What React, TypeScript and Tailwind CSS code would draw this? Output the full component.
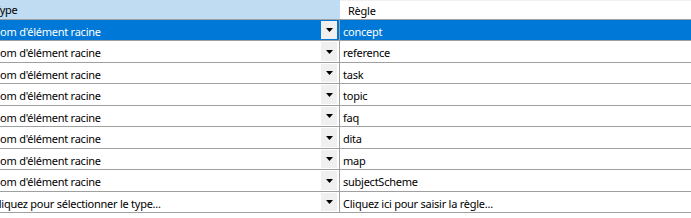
import React from 'react';

const rules = [
    'concept',
    'reference',
    'task',
    'topic',
    'faq',
    'dita',
    'map',
    'subjectScheme',
];

const font = { fontFamily: '"Noto Sans", "Open Sans", sans-serif' };

const DropButton: React.FC = () => (
    <div className="w-[16px] self-stretch my-[1px] bg-[#f0f0f0] flex items-center justify-center shrink-0">
        <svg width="7" height="4" viewBox="0 0 7 4">
            <path d="M0 0h7L3.5 4z" fill="#000" />
        </svg>
    </div>
);

interface RowProps {
    type: string;
    rule: string;
    selected?: boolean;
    tall?: boolean;
}

const Row: React.FC<RowProps> = ({ type, rule, selected, tall }) => (
    <div
        className={`flex border-b border-[#a0a0a0] overflow-hidden ${tall ? 'h-[22px]' : 'h-[21px]'} ${
            selected ? 'bg-[#0078d7] text-white' : 'bg-white text-black'
        }`}
    >
        <div className="w-[339px] flex overflow-hidden pr-[2px]">
            <span className="flex-1 whitespace-nowrap ml-[-8px] mt-[2px] leading-[20px]">{type}</span>
            <DropButton />
        </div>
        <div className="flex-1 border-l border-[#a0a0a0] pl-[3px] pt-[2px] leading-[20px] whitespace-nowrap">
            {rule}
        </div>
    </div>
);

export default function App() {
    return (
        <div
            className="w-[691px] h-[218px] bg-white overflow-hidden text-[11px] tracking-[-0.25px]"
            style={font}
        >
            <div className="flex h-[20px] border-b border-[#a0a0a0] leading-[19px]">
                <div className="w-[340px] bg-[#bfdcf3] overflow-hidden whitespace-nowrap">
                    <span className="ml-[-6px]">Type</span>
                </div>
                <div className="flex-1 pl-[8px] border-t border-t-[#f0f0f0]">Règle</div>
            </div>
            {rules.map((r, i) => (
                <Row
                    key={r}
                    type="Nom d'élément racine"
                    rule={r}
                    selected={i === 0}
                    tall={i % 2 === 1}
                />
            ))}
            <Row
                type="Cliquez pour sélectionner le type..."
                rule="Cliquez ici pour saisir la règle..."
                tall={false}
            />
        </div>
    );
}
